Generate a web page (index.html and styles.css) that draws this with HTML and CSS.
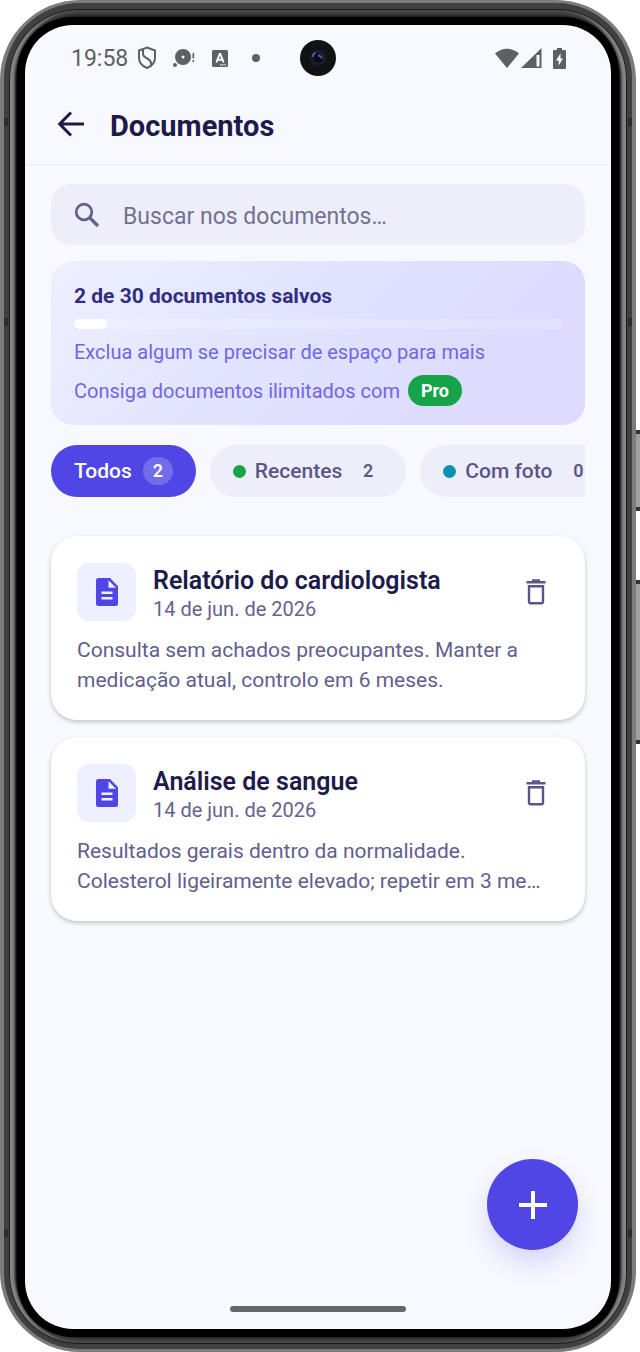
FILE: index.html
```
<!DOCTYPE html>
<html lang="pt">

<head>
    <meta charset="UTF-8">
    <meta name="viewport" content="width=device-width, initial-scale=1.0">
    <title>Documentos</title>
    <link rel="stylesheet" href="styles.css">
</head>

<body>
    <div class="phone">
        <i class="key power"></i>
        <i class="key volume"></i>
        <i class="seam high"></i>
        <i class="seam top"></i>
        <i class="seam bottom"></i>
        <div class="rim">
            <div class="bezel">
                <div class="screen">
                    <div class="status">
                        <span class="time">19:58</span>
                        <svg class="shield" width="20" height="24" viewBox="0 0 20 24" fill="none" stroke="#5f6064" stroke-width="2">
                            <path d="M10 1.500 18 4.500v7c0 4.800-3.200 8.700-8 10.500-4.800-1.800-8-5.700-8-10.500v-7z" />
                            <path d="M6 3.500v4.200c0 5 8 4.300 8 9.300v2" />
                        </svg>
                        <svg class="disc" width="24" height="20" viewBox="0 0 24 20" fill="#5f6064">
                            <path fill-rule="evenodd" d="M11 1a8 8 0 1 1 0 16 8 8 0 0 1 0-16zm0 6.500a1.500 1.500 0 1 0 0 3 1.500 1.500 0 0 0 0-3z" />
                            <circle cx="3" cy="17" r="2" />
                            <path d="M20.500 5h1.600v5.500h-1.600zM20.500 12h1.600v2h-1.600z" />
                        </svg>
                        <svg class="letter" width="16" height="17" viewBox="0 0 16 17">
                            <rect width="16" height="17" rx="1.500" fill="#5f6064" />
                            <path d="M4.300 12.500 7.700 4h.6l3.400 8.500M5.700 9.800h4.600" fill="none" stroke="#fff" stroke-width="1.900" />
                            <path d="M8 14.800h6" stroke="#fff" stroke-width="1.200" stroke-dasharray="1.400 .8" />
                        </svg>
                        <i class="more"></i>
                        <div class="signals">
                            <svg width="26" height="20" viewBox="0 0 26 20" fill="#5f6064">
                                <path d="M1 5.500C8-1 18-1 25 5.500L13 20z" />
                            </svg>
                            <svg width="21" height="20" viewBox="0 0 21 20" fill="#5f6064">
                                <path fill-rule="evenodd" d="M0 20 20.500 0v20zM15.500 7v11.500h3V7z" />
                            </svg>
                            <svg class="battery" width="13" height="21" viewBox="0 0 13 21">
                                <path d="M4 0h5v2h3q1 0 1 1v17q0 1-1 1H1q-1 0-1-1V3q0-1 1-1h3z" fill="#5f6064" />
                                <path d="M7.500 5.500 3 12.500h2.700v5L10 10.500H7.500z" fill="#fff" />
                            </svg>
                        </div>
                        <svg class="camera" width="36" height="36" viewBox="0 0 36 36">
                            <circle cx="18" cy="18" r="18" fill="#111214" />
                            <circle cx="18" cy="18" r="8" fill="#1b1a2c" />
                            <circle cx="18" cy="18" r="4.500" fill="#0a0a12" />
                            <path d="M12.500 17a6 6 0 0 1 3-4.500M18 15.500q3 0 4 3" fill="none" stroke="#6558ad" stroke-width="1.800" />
                        </svg>
                    </div>

                    <header class="bar">
                        <button class="icon_btn back" aria-label="Voltar">
                            <svg width="28" height="26" viewBox="0 0 28 26" fill="none" stroke="#1e1b4b" stroke-width="3">
                                <path d="M27 13H3M14 1.500 2.700 13 14 24.500" />
                            </svg>
                        </button>
                        <h1>Documentos</h1>
                    </header>

                    <main>
                        <label class="search">
                            <svg width="26" height="26" viewBox="0 0 26 26" fill="none" stroke="#62608c" stroke-width="2.700">
                                <circle cx="10" cy="10" r="7.800" />
                                <path d="m15.500 15.500 8.500 8.500" stroke-width="3.200" />
                            </svg>
                            <input type="text" aria-label="Buscar" placeholder="Buscar nos documentos…">
                        </label>

                        <section class="quota">
                            <h2>2 de 30 documentos salvos</h2>
                            <div class="track">
                                <div class="fill" style="width: 6.67%"></div>
                            </div>
                            <p>Exclua algum se precisar de espaço para mais</p>
                            <p class="upsell">Consiga documentos ilimitados com <a class="pro" href="#pro">Pro</a></p>
                        </section>

                        <div class="chips">
                            <button class="chip active">Todos <span class="count">2</span></button>
                            <button class="chip"><i class="dot green"></i>Recentes <span class="count">2</span></button>
                            <button class="chip"><i class="dot teal"></i>Com foto <span class="count">0</span></button>
                        </div>

                        <article class="card">
                            <div class="head">
                                <div class="thumb">
                                    <svg width="22" height="28" viewBox="0 0 22 28">
                                        <path fill="#4f46e5" fill-rule="evenodd" d="M2.500 0H14l8 8.300v17.200q0 2.500-2.500 2.500h-17Q0 28 0 25.500v-23Q0 0 2.500 0zM12.500 2.200V9.800H20zM5.500 13.500V16h11v-2.500zM5.500 19v2.500h11V19z" />
                                    </svg>
                                </div>
                                <div class="title">
                                    <h3>Relatório do cardiologista</h3>
                                    <time datetime="2026-06-14">14 de jun. de 2026</time>
                                </div>
                                <button class="icon_btn" aria-label="Excluir">
                                    <svg width="20" height="26" viewBox="0 0 20 26" fill="none" stroke="#5b5688" stroke-width="2.400">
                                        <path d="M.5 3.200h19M6 1.500h8" />
                                        <path d="M3 7.200h14v15.300q0 1.700-1.700 1.700H4.700Q3 24.200 3 22.500z" />
                                    </svg>
                                </button>
                            </div>
                            <p>Consulta sem achados preocupantes. Manter a medicação atual, controlo em 6 meses.</p>
                        </article>

                        <article class="card">
                            <div class="head">
                                <div class="thumb">
                                    <svg width="22" height="28" viewBox="0 0 22 28">
                                        <path fill="#4f46e5" fill-rule="evenodd" d="M2.500 0H14l8 8.300v17.200q0 2.500-2.500 2.500h-17Q0 28 0 25.500v-23Q0 0 2.500 0zM12.500 2.200V9.800H20zM5.500 13.500V16h11v-2.500zM5.500 19v2.500h11V19z" />
                                    </svg>
                                </div>
                                <div class="title">
                                    <h3>Análise de sangue</h3>
                                    <time datetime="2026-06-14">14 de jun. de 2026</time>
                                </div>
                                <button class="icon_btn" aria-label="Excluir">
                                    <svg width="20" height="26" viewBox="0 0 20 26" fill="none" stroke="#5b5688" stroke-width="2.400">
                                        <path d="M.5 3.200h19M6 1.500h8" />
                                        <path d="M3 7.200h14v15.300q0 1.700-1.700 1.700H4.700Q3 24.200 3 22.500z" />
                                    </svg>
                                </button>
                            </div>
                            <p>Resultados gerais dentro da normalidade. Colesterol ligeiramente elevado; repetir em 3 me…</p>
                        </article>
                    </main>

                    <button class="fab" aria-label="Adicionar documento">
                        <svg width="28" height="28" viewBox="0 0 28 28" stroke="#fff" stroke-width="4">
                            <path d="M14 0v28M0 14h28" />
                        </svg>
                    </button>
                    <i class="home"></i>
                </div>
            </div>
        </div>
    </div>
</body>

</html>
```
FILE: styles.css
```
* {
    margin: 0;
    padding: 0;
    box-sizing: border-box;
}

body {
    background: #fff;
    font-family: Roboto, "Liberation Sans", sans-serif;
    color: #1e1b4b;
}

button {
    border: 0;
    background: none;
    font: inherit;
    cursor: pointer;
}

svg {
    display: block;
    flex: none;
}

/* phone body */
.phone {
    position: relative;
    min-height: 100vh;
    margin-right: 4px;
    padding: 3px 4px;
    display: flex;
    border-radius: 80px;
    background: #7c7c7c;
}

.rim {
    flex: 1;
    min-width: 0;
    display: flex;
    padding: 6px 5px 5px;
    border-radius: 76px;
    background: #404040;
}

.bezel {
    flex: 1;
    min-width: 0;
    display: flex;
    padding: 16px 16px 15px;
    border-radius: 70px;
    background: #000;
    box-shadow: inset 0 0 0 1px #1c1c1c, inset 8px 0 3px -2px #858585, inset -8px 0 3px -2px #858585, inset 0 9px 5px -2px #484848, inset 0 -9px 5px -2px #484848;
}

.screen {
    position: relative;
    flex: 1;
    min-width: 0;
    display: flex;
    flex-direction: column;
    border-radius: 48px;
    background: #f8f9fe;
    box-shadow: 0 0 0 8px #000;
}

.key {
    position: absolute;
    right: -4px;
    width: 4px;
    background: #a0a0a0;
    border: solid #333;
    border-width: 4px 0;
}

.power {
    top: 430px;
    height: 81px;
}

.volume {
    top: 580px;
    height: 164px;
}

.seam {
    position: absolute;
    left: 4px;
    right: 4px;
    height: 8px;
    border: solid #2b2b2b;
    border-width: 0 4px;
}

.seam.high {
    top: 118px;
}

.seam.top {
    top: 318px;
}

.seam.bottom {
    bottom: 115px;
}

/* status bar */
.status {
    position: relative;
    display: flex;
    align-items: center;
    height: 66px;
    padding: 0 45px 0 46px;
}

.time {
    font-size: 23px;
    color: #5f6064;
}

.shield {
    margin-left: 9px;
}

.disc {
    margin-left: 15px;
}

.letter {
    margin-left: 16px;
}

.more {
    width: 8px;
    height: 8px;
    margin-left: 24px;
    border-radius: 50%;
    background: #5f6064;
}

.signals {
    display: flex;
    align-items: center;
    margin-left: auto;
    gap: 1px;
}

.battery {
    margin-left: 10px;
}

.camera {
    position: absolute;
    left: 50%;
    top: 50%;
    transform: translate(-50%, -50%);
}

/* header */
.bar {
    display: flex;
    align-items: center;
    gap: 25px;
    height: 75px;
    padding: 0 32px 7px;
    border-bottom: 2px solid #f0f1f7;
}

h1 {
    margin-top: 4px;
    font-size: 29px;
    line-height: 36px;
    font-weight: 700;
}

main {
    display: flex;
    flex-direction: column;
    padding: 18px 26px;
}

.search {
    display: flex;
    align-items: center;
    gap: 23px;
    height: 61px;
    padding: 0 23px;
    border-radius: 20px;
    background: #eeeefa;
}

.search input {
    flex: 1;
    min-width: 0;
    padding-top: 3px;
    border: 0;
    outline: 0;
    background: none;
    font: inherit;
    font-size: 23px;
    color: #1e1b4b;
}

.search input::placeholder {
    color: #737191;
    opacity: 1;
}

/* quota */
.quota {
    margin-top: 16px;
    padding: 20px 23px 19px;
    border-radius: 22px;
    background: linear-gradient(135deg, #eef0ff, #e0e2ff 50%, #dedcfe 75%, #dddafd);
    color: #6f66e8;
}

h2 {
    font-size: 21px;
    line-height: 30px;
    font-weight: 700;
    color: #312e81;
}

.track {
    height: 10px;
    margin: 8px 0 12px;
    border-radius: 5px;
    background: rgba(255, 255, 255, 0.2);
}

.fill {
    height: 10px;
    border-radius: 5px;
    background: #fff;
}

.quota p {
    font-size: 20px;
    line-height: 22px;
}

.quota .upsell {
    display: flex;
    align-items: center;
    gap: 8px;
    margin-top: 12px;
}

.pro {
    padding: 0 13px;
    border-radius: 16px;
    background: #16a34a;
    color: #fff;
    font-size: 18px;
    line-height: 31px;
    font-weight: 700;
    text-decoration: none;
}

/* filters */
.chips {
    display: flex;
    gap: 14px;
    margin-top: 20px;
    overflow: hidden;
}

.chip {
    flex: none;
    display: flex;
    align-items: center;
    height: 52px;
    padding: 0 23px;
    border-radius: 26px;
    background: #eeeefa;
    color: #5b5688;
    font-size: 21px;
    line-height: 28px;
    font-weight: 500;
}

.chip.active {
    background: #4f46e5;
    color: #fff;
}

.count {
    min-width: 30px;
    margin-left: 11px;
    border-radius: 14px;
    font-size: 18px;
    font-weight: 600;
    text-align: center;
}

.active .count {
    background: rgba(255, 255, 255, 0.2);
}

.dot {
    width: 13px;
    height: 13px;
    margin-right: 9px;
    border-radius: 50%;
}

.green {
    background: #16a34a;
}

.teal {
    background: #0891b2;
}

/* documents */
.card {
    margin-top: 17px;
    padding: 27px 26px 25px;
    border-radius: 26px;
    background: #fff;
    box-shadow: 0 2px 4px rgba(0, 0, 0, 0.22);
}

.chips + .card {
    margin-top: 39px;
}

.head {
    display: flex;
    align-items: center;
    gap: 17px;
    height: 58px;
}

.thumb {
    flex: none;
    display: flex;
    align-items: center;
    justify-content: center;
    width: 59px;
    height: 58px;
    border-radius: 12px;
    background: #eef0ff;
}

.title {
    flex: 1;
    min-width: 0;
    padding-top: 6px;
}

h3 {
    font-size: 25px;
    line-height: 29px;
    font-weight: 600;
}

time {
    display: block;
    font-size: 20px;
    line-height: 29px;
    color: #65628f;
}

.head .icon_btn {
    margin-right: 13px;
}

.card p {
    margin-top: 14px;
    font-size: 21px;
    line-height: 30px;
    color: #625e8d;
}

/* floating button */
.fab {
    position: absolute;
    right: 33px;
    bottom: 79px;
    display: flex;
    align-items: center;
    justify-content: center;
    width: 91px;
    height: 91px;
    border-radius: 50%;
    background: #4f46e5;
    box-shadow: 0 13px 26px rgba(79, 70, 229, 0.2);
}

.home {
    align-self: center;
    width: 176px;
    height: 6px;
    margin-top: auto;
    margin-bottom: 17px;
    border-radius: 3px;
    background: #66676b;
}
```
